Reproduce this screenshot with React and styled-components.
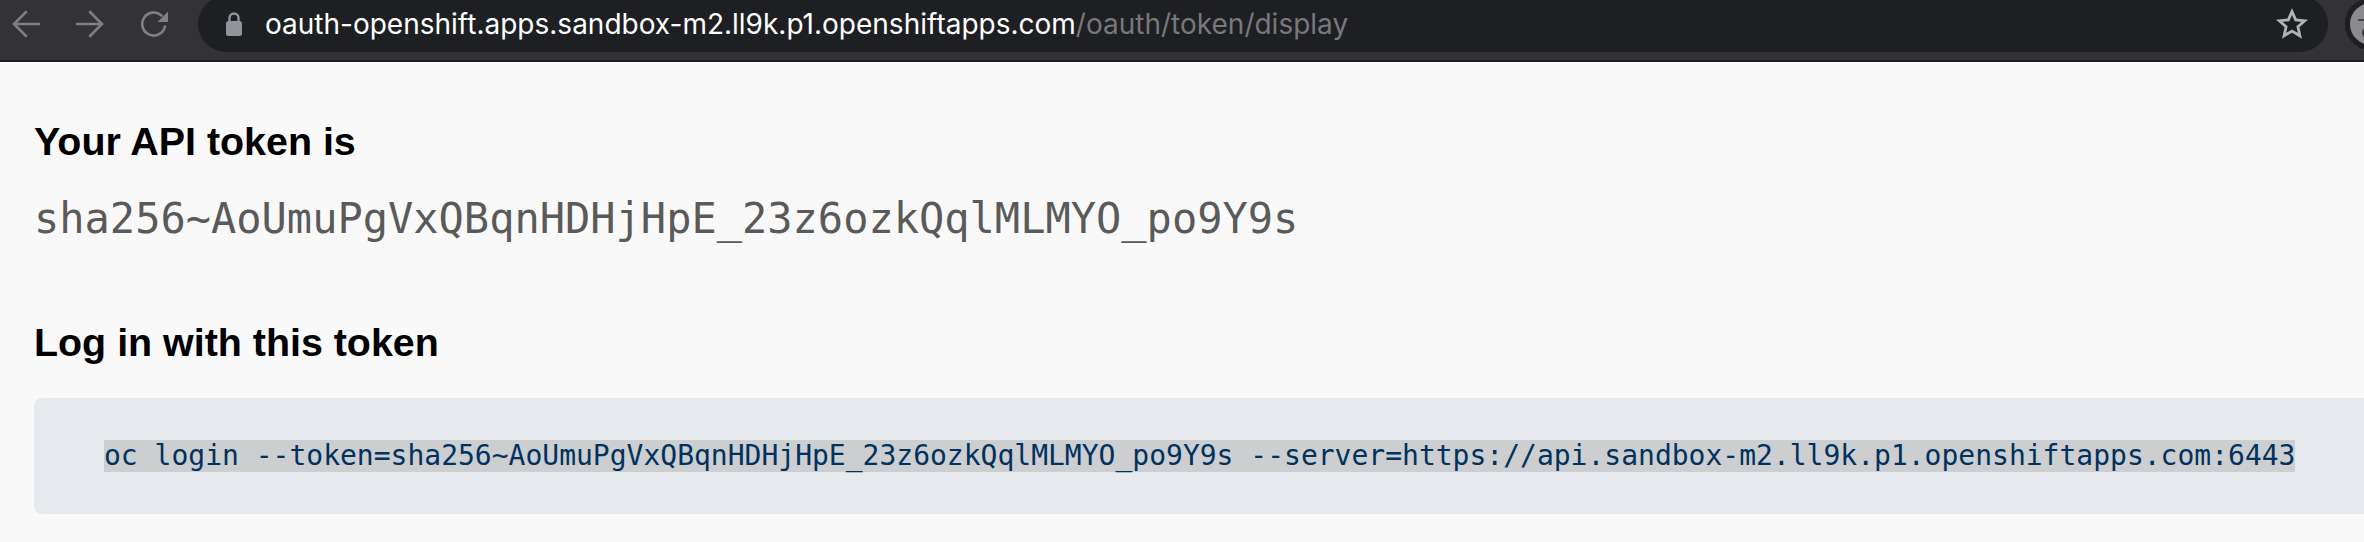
import styled, { createGlobalStyle } from 'styled-components'

const GlobalStyle = createGlobalStyle`
    html, body {
        margin: 0;
        padding: 0;
        background-color: #F9F9F9;
        overflow: hidden;
    }
`

const Page = styled.div`
    width: 2364px;
    height: 542px;
    overflow: hidden;
    font-family: "Liberation Sans", Arial, sans-serif;
`

const Toolbar = styled.header`
    height: 60px;
    background-color: #323237;
    border-bottom: 2px solid #1F1F20;
    display: flex;
    align-items: flex-start;
    overflow: hidden;
`

const NavIcons = styled.div`
    width: 198px;
    height: 48px;
    flex-shrink: 0;
    display: flex;
    align-items: center;
    padding-left: 10px;
    gap: 32px;
    box-sizing: border-box;
`

const NavIcon = styled.svg`
    width: 32px;
    height: 32px;
    flex-shrink: 0;
    fill: none;
    stroke: #7F8084;
    stroke-width: 2.6;
    stroke-linecap: round;
`

const AddressBar = styled.div`
    width: 2130px;
    height: 56px;
    margin-top: -4px;
    flex-shrink: 0;
    border-radius: 28px;
    background-color: #1E1F23;
    display: flex;
    align-items: center;
    padding: 0 20px 0 27px;
    box-sizing: border-box;
`

const Url = styled.div`
    flex: 1;
    margin-left: 22px;
    font-family: "Inter", "Liberation Sans", sans-serif;
    font-size: 28px;
    color: #FFF;
    white-space: nowrap;
`

const UrlPath = styled.span`
    color: #77787B;
`

const Avatar = styled.div`
    width: 52px;
    height: 52px;
    margin: -2px 0 0 17px;
    flex-shrink: 0;
    box-sizing: border-box;
    border-radius: 50%;
    background-color: #8A8B8E;
    border: 5px solid #1F1F22;
    padding: 16px 0 0 8px;
`

const Content = styled.main`
    padding: 57px 0 0 34px;
`

const Title = styled.h2`
    margin: 0;
    font-size: 39.4px;
    line-height: 44px;
    font-weight: 700;
    color: #000;
`

const Token = styled.div`
    margin: 31px 0 76px;
    font-family: "DejaVu Sans Mono", "Liberation Mono", monospace;
    font-size: 42px;
    line-height: 50px;
    color: #5A5A5A;
`

const CodeBlock = styled.pre`
    margin: 34px 0 0;
    height: 116px;
    padding-left: 70px;
    display: flex;
    align-items: center;
    background-color: #E6E9ED;
    border-radius: 8px 0 0 8px;
    font-family: "DejaVu Sans Mono", "Liberation Mono", monospace;
    font-size: 28px;
    color: #00325F;
`

const Selected = styled.span`
    background-color: #CDCECF;
    line-height: 32px;
`

function App () {
    return (
        <Page>
            <GlobalStyle />
            <Toolbar>
                <NavIcons>
                    <NavIcon viewBox="0 0 32 32">
                        <path d="M29 16H5M16 4 4 16l12 12" />
                    </NavIcon>
                    <NavIcon viewBox="0 0 32 32">
                        <path d="M3 16h24M16 4l12 12-12 12" />
                    </NavIcon>
                    <NavIcon viewBox="0 0 32 32">
                        <path d="M23.500 7.500a11.500 11.500 0 1 0 3.500 11" />
                        <path d="M30 3.500v10.500H19.500z" fill="#7F8084" stroke="none" />
                    </NavIcon>
                </NavIcons>
                <AddressBar>
                    <svg width="18" height="28" viewBox="0 0 18 28">
                        <path d="M4.500 12V8a4.500 4.500 0 0 1 9 0v4" fill="none" stroke="#92949A" strokeWidth="2.4" />
                        <rect x="1" y="11" width="16" height="15" rx="2.500" fill="#92949A" />
                    </svg>
                    <Url>
                        oauth-openshift.apps.sandbox-m2.ll9k.p1.openshiftapps.com
                        <UrlPath>/oauth/token/display</UrlPath>
                    </Url>
                    <svg width="32" height="32" viewBox="0 0 32 32">
                        <path d="M16 3.500l3.700 8.400 9 .9-6.800 6 2 9-7.900-4.700-7.900 4.700 2-9-6.800-6 9-.9z" fill="none" stroke="#B2B3B5" strokeWidth="2.800" />
                    </svg>
                </AddressBar>
                <Avatar>
                    <svg width="16" height="20" viewBox="0 0 16 20">
                        <path d="M0 1h16M9 9a5 5 0 1 0 5 8" fill="none" stroke="#2E2E31" strokeWidth="1.600" />
                    </svg>
                </Avatar>
            </Toolbar>
            <Content>
                <Title>Your API token is</Title>
                <Token>sha256~AoUmuPgVxQBqnHDHjHpE_23z6ozkQqlMLMYO_po9Y9s</Token>
                <Title>Log in with this token</Title>
                <CodeBlock>
                    <Selected>oc login --token=sha256~AoUmuPgVxQBqnHDHjHpE_23z6ozkQqlMLMYO_po9Y9s --server=https://api.sandbox-m2.ll9k.p1.openshiftapps.com:6443</Selected>
                </CodeBlock>
            </Content>
        </Page>
    )
}

export default App
